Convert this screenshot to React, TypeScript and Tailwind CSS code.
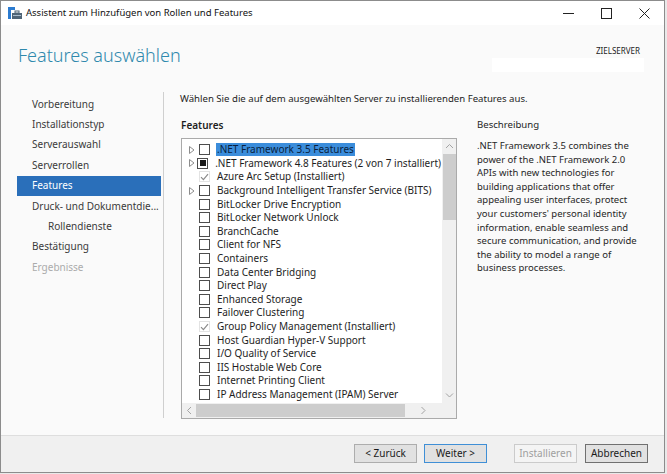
import React from "react";

type Item = { label: string; state: "off" | "partial" | "installed"; expand?: boolean; selected?: boolean };

const features: Item[] = [
  { label: ".NET Framework 3.5 Features", state: "off", expand: true, selected: true },
  { label: ".NET Framework 4.8 Features (2 von 7 installiert)", state: "partial", expand: true },
  { label: "Azure Arc Setup (Installiert)", state: "installed" },
  { label: "Background Intelligent Transfer Service (BITS)", state: "off", expand: true },
  { label: "BitLocker Drive Encryption", state: "off" },
  { label: "BitLocker Network Unlock", state: "off" },
  { label: "BranchCache", state: "off" },
  { label: "Client for NFS", state: "off" },
  { label: "Containers", state: "off" },
  { label: "Data Center Bridging", state: "off" },
  { label: "Direct Play", state: "off" },
  { label: "Enhanced Storage", state: "off" },
  { label: "Failover Clustering", state: "off" },
  { label: "Group Policy Management (Installiert)", state: "installed" },
  { label: "Host Guardian Hyper-V Support", state: "off" },
  { label: "I/O Quality of Service", state: "off" },
  { label: "IIS Hostable Web Core", state: "off" },
  { label: "Internet Printing Client", state: "off" },
  { label: "IP Address Management (IPAM) Server", state: "off" },
];

const steps = [
  { label: "Vorbereitung" },
  { label: "Installationstyp" },
  { label: "Serverauswahl" },
  { label: "Serverrollen" },
  { label: "Features", active: true },
  { label: "Druck- und Dokumentdie..." },
  { label: "Rollendienste", indent: true },
  { label: "Bestätigung" },
  { label: "Ergebnisse", disabled: true },
];

const description = [
  ".NET Framework 3.5 combines the",
  "power of the .NET Framework 2.0",
  "APIs with new technologies for",
  "building applications that offer",
  "appealing user interfaces, protect",
  "your customers' personal identity",
  "information, enable seamless and",
  "secure communication, and provide",
  "the ability to model a range of",
  "business processes.",
];

function Checkbox({ state }: { state: Item["state"] }) {
  if (state === "installed") {
    return (
      <span className="w-[11px] h-[11px] border border-[#e3e3e3] flex items-center justify-center">
        <svg width="9" height="8" viewBox="0 0 9 8">
          <path d="M1 4.2 L3.4 6.6 L8 1.2" fill="none" stroke="#8a8a8a" strokeWidth="1.2" />
        </svg>
      </span>
    );
  }
  return (
    <span className="w-[11px] h-[11px] border border-[#4d4d4d] bg-white flex items-center justify-center">
      {state === "partial" && <span className="w-[6px] h-[6px] bg-[#1a1a1a]" />}
    </span>
  );
}

function Expander() {
  return (
    <svg width="6" height="8" viewBox="0 0 6 8">
      <path d="M0.5 0.5 L5 4 L0.5 7.5 Z" fill="none" stroke="#8c8c8c" strokeWidth="1" />
    </svg>
  );
}

function Chevron({ dir }: { dir: "up" | "down" | "left" | "right" }) {
  const d = {
    up: "M1 5 L4.5 1.5 L8 5",
    down: "M1 1.5 L4.5 5 L8 1.5",
    left: "M5 1 L1.5 4.5 L5 8",
    right: "M1.5 1 L5 4.5 L1.5 8",
  }[dir];
  const vertical = dir === "up" || dir === "down";
  return (
    <svg width={vertical ? 9 : 7} height={vertical ? 7 : 9} viewBox={vertical ? "0 0 9 7" : "0 0 7 9"}>
      <path d={d} fill="none" stroke="#a3a3a3" strokeWidth="1" />
    </svg>
  );
}

function Button({ children, variant }: { children: React.ReactNode; variant?: "default" | "disabled" | "cancel" }) {
  const cls =
    variant === "default"
      ? "border-[#3f8fd6] bg-[#e1e1e1] text-[#1a1a1a]"
      : variant === "disabled"
        ? "border-[#cbcbcb] bg-[#f4f4f4] text-[#9f9f9f]"
        : variant === "cancel"
          ? "border-[#707070] bg-[#e1e1e1] text-[#1a1a1a]"
          : "border-[#adadad] bg-[#e1e1e1] text-[#1a1a1a]";
  return (
    <div className={`w-[63px] h-[19px] border flex items-center justify-center text-[10px] ${cls}`}>{children}</div>
  );
}

export default function App() {
  return (
    <div className="w-[667px] h-[474px] bg-[#e9e9e9] overflow-hidden font-['Noto_Sans',sans-serif] text-[#1e1e1e]">
      <div className="w-[665px] h-[473px] border border-[#8c8c8c] bg-[#fafafa] flex flex-col">
        {/* Title bar */}
        <div className="h-[24px] bg-white flex items-center shrink-0">
          <svg className="ml-[7px]" width="14" height="13" viewBox="0 0 14 13">
            <rect x="0" y="0" width="3" height="12" fill="#2b7bd0" />
            <rect x="0" y="0" width="7" height="3" fill="#2b7bd0" />
            <rect x="4" y="6" width="10" height="6" fill="#4f6476" />
            <rect x="7" y="4" width="4" height="2" fill="none" stroke="#4f6476" strokeWidth="1" />
            <rect x="5" y="8" width="8" height="1" fill="#a9bccc" />
          </svg>
          <span className="ml-[4px] text-[9.5px] text-[#111]">Assistent zum Hinzufügen von Rollen und Features</span>
          <div className="ml-auto flex items-center h-full">
            <div className="w-[38px] h-full flex items-center justify-center">
              <svg width="11" height="1" viewBox="0 0 11 1"><rect width="11" height="1" fill="#222" /></svg>
            </div>
            <div className="w-[38px] h-full flex items-center justify-center">
              <svg width="11" height="11" viewBox="0 0 11 11"><rect x="0.5" y="0.5" width="10" height="10" fill="none" stroke="#222" /></svg>
            </div>
            <div className="w-[38px] h-full flex items-center justify-center mr-[1px]">
              <svg width="11" height="11" viewBox="0 0 11 11"><path d="M0.5 0.5 L10.5 10.5 M10.5 0.5 L0.5 10.5" stroke="#222" strokeWidth="1" /></svg>
            </div>
          </div>
        </div>

        {/* Header */}
        <div className="h-[66px] shrink-0 flex items-start justify-between">
          <h1 className="mt-[21px] ml-[17px] text-[18px] font-light text-[#2f89ad] leading-none">Features auswählen</h1>
          <div className="mt-[22px] mr-[20px] flex flex-col items-end">
            <span className="text-[8px] text-[#222] leading-none mr-[4px]">ZIELSERVER</span>
            <div className="mt-[3px] w-[152px] h-[14px] bg-white" />
          </div>
        </div>

        {/* Main */}
        <div className="flex flex-1 min-h-0">
          {/* Steps */}
          <div className="w-[163px] shrink-0 pt-[2px] pl-[16px] pr-[2px] pb-[17px] border-r border-[#cfcfcf] mb-[17px] mt-[1px]">
            {steps.map((s) => (
              <div
                key={s.label}
                className={`h-[20.4px] flex items-center whitespace-nowrap text-[10px] ${s.indent ? "pl-[31px]" : "pl-[15px]"} ${
                  s.active ? "bg-[#2a6fba] text-white" : s.disabled ? "text-[#ababab]" : "text-[#3a3a3a]"
                }`}
              >
                {s.label}
              </div>
            ))}
          </div>

          {/* Content */}
          <div className="flex-1 pl-[16px] pt-[1px]">
            <p className="text-[9.6px] leading-[14px] text-[#1e1e1e]">
              Wählen Sie die auf dem ausgewählten Server zu installierenden Features aus.
            </p>
            <div className="flex mt-[12px]">
              <div className="w-[276px]">
                <div className="text-[10px] font-semibold leading-[14px] pl-[1px]">Features</div>
                <div className="mt-[6px] ml-[1px] w-[276px] h-[281px] border border-[#aaaaaa] bg-white flex flex-col">
                  <div className="flex flex-1 min-h-0">
                    <div className="flex-1 pt-[4px] overflow-hidden">
                      {features.map((f) => (
                        <div key={f.label} className="h-[13.6px] flex items-center whitespace-nowrap">
                          <span className="w-[8px] ml-[7px] flex items-center">{f.expand && <Expander />}</span>
                          <span className="ml-[2px]">
                            <Checkbox state={f.state} />
                          </span>
                          <span
                            className={`ml-[6px] text-[10px] leading-[13px] px-[1px] ${
                              f.selected ? "bg-[#3b8ddb] text-[#0a1f3d]" : "text-[#1e1e1e]"
                            }`}
                          >
                            {f.label}
                          </span>
                        </div>
                      ))}
                    </div>
                    {/* Vertical scrollbar */}
                    <div className="w-[14px] bg-[#f0f0f0] flex flex-col items-center">
                      <div className="h-[15px] flex items-center justify-center">
                        <Chevron dir="up" />
                      </div>
                      <div className="w-[13px] h-[66px] bg-[#cdcdcd]" />
                      <div className="flex-1" />
                      <div className="h-[15px] flex items-center justify-center">
                        <Chevron dir="down" />
                      </div>
                    </div>
                  </div>
                  {/* Horizontal scrollbar */}
                  <div className="h-[15px] flex shrink-0">
                    <div className="flex-1 bg-[#f0f0f0] flex items-center">
                      <div className="w-[14px] flex items-center justify-center">
                        <Chevron dir="left" />
                      </div>
                      <div className="w-[209px] h-[13px] bg-[#cdcdcd]" />
                      <div className="flex-1 flex items-center justify-center">
                        <Chevron dir="right" />
                      </div>
                    </div>
                    <div className="w-[14px] bg-[#f0f0f0]" />
                  </div>
                </div>
              </div>
              <div className="ml-[21px]">
                <div className="text-[9.6px] leading-[14px] text-[#1e1e1e]">Beschreibung</div>
                <div className="mt-[7px]">
                  {description.map((l) => (
                    <div key={l} className="h-[13.6px] text-[9.5px] leading-[13.6px] whitespace-nowrap text-[#262626]">
                      {l}
                    </div>
                  ))}
                </div>
              </div>
            </div>
          </div>
        </div>

        {/* Footer */}
        <div className="h-[37px] shrink-0 border-t border-[#dedede] bg-[#f0f0f0] flex items-center justify-end pr-[16px] pb-[2px]">
          <div className="flex gap-[7px]">
            <Button>&lt; Zurück</Button>
            <Button variant="default">Weiter &gt;</Button>
          </div>
          <div className="flex gap-[8px] ml-[27px]">
            <Button variant="disabled">Installieren</Button>
            <Button variant="cancel">Abbrechen</Button>
          </div>
        </div>
      </div>
    </div>
  );
}
